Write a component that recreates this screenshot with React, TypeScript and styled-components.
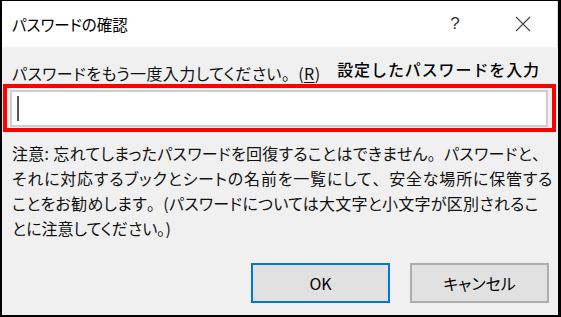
import styled, { createGlobalStyle } from 'styled-components';

const GlobalStyle = createGlobalStyle`
  html, body {
    margin: 0;
    padding: 0;
    background: #ffffff;
  }
  * {
    box-sizing: border-box;
  }
`;

const uiFont = `"Noto Sans CJK JP", "Noto Sans", sans-serif`;

const Frame = styled.div`
  width: 561px;
  height: 317px;
  display: flex;
  flex-direction: column;
  background: #f0f0f0;
  border-style: solid;
  border-color: #000;
  border-width: 1px 3px 2px 2px;
  font-family: ${uiFont};
  font-feature-settings: 'palt';
  color: #000;
`;

const TitleBar = styled.div`
  height: 46px;
  flex-shrink: 0;
  display: flex;
  align-items: center;
  background: #ffffff;
  padding-left: 10px;
  border-right: 1px solid #d8d8d8;
`;

const Title = styled.div`
  flex: 1;
  font-size: 15.5px;
  line-height: 20px;
  padding-bottom: 1px;
`;

const TitleButton = styled.div`
  width: 68px;
  height: 46px;
  display: flex;
  align-items: center;
  justify-content: center;
  color: #333;
  font-family: "Liberation Sans", sans-serif;
  font-size: 17px;
  font-weight: 300;
`;

const Body = styled.div`
  flex: 1;
  display: flex;
  flex-direction: column;
`;

const LabelRow = styled.div`
  display: flex;
  align-items: flex-end;
  justify-content: space-between;
  margin-top: 14px;
  padding-left: 10px;
  padding-right: 18px;
  height: 23px;
`;

const Label = styled.div`
  font-size: 16px;
  line-height: 22px;
  letter-spacing: 0.4px;
  color: #111;

  u {
    text-underline-offset: 2px;
  }
`;

/* full-width punctuation, as the dialog font draws it */
const Punct = styled.span`
  font-feature-settings: normal;
`;

const Annotation = styled.div`
  font-size: 16px;
  line-height: 20px;
  font-weight: 500;
  letter-spacing: 0.9px;
  font-feature-settings: normal;
  padding-bottom: 5px;
`;

const RedBox = styled.div`
  margin: 0 2px 0 1px;
  border: 4px solid #ff0000;
  padding: 2px 4px 1px 3px;
`;

const Input = styled.div`
  height: 37px;
  background: #ffffff;
  border: 2px solid #cdcdcd;
  display: flex;
  align-items: center;
  padding-left: 5px;
`;

const Caret = styled.span`
  width: 2px;
  height: 25px;
  background: #555;
`;

const Note = styled.div`
  margin-top: 9px;
  padding-left: 10px;
  font-size: 16px;
  line-height: 25px;
  white-space: nowrap;
  color: #111;
`;

const NoteLine = styled.div<{ $track: number }>`
  letter-spacing: ${(p) => p.$track}px;
`;

const ButtonRow = styled.div`
  margin-top: auto;
  display: flex;
  justify-content: flex-end;
  gap: 20px;
  padding: 0 9px 12px 0;
`;

const Button = styled.button<{ $primary?: boolean }>`
  width: 139px;
  height: 40px;
  background: #e1e1e1;
  border: 2px solid ${(p) => (p.$primary ? '#0078d7' : '#adadad')};
  font-family: ${uiFont};
  font-feature-settings: 'palt';
  font-size: 16px;
  color: #000;
  padding: 0;
`;

const CloseIcon = () => (
  <svg width="16" height="16" viewBox="0 0 16 16">
    <path d="M1 1 L15 15 M15 1 L1 15" stroke="#444" strokeWidth="1.1" fill="none" />
  </svg>
);

export default function App() {
  return (
    <>
      <GlobalStyle />
      <Frame>
        <TitleBar>
          <Title>パスワードの確認</Title>
          <TitleButton>?</TitleButton>
          <TitleButton>
            <CloseIcon />
          </TitleButton>
        </TitleBar>
        <Body>
          <LabelRow>
            <Label>
              パスワードをもう一度入力してください<Punct>。</Punct>(<u>R</u>)
            </Label>
            <Annotation>設定したパスワードを入力</Annotation>
          </LabelRow>
          <RedBox>
            <Input>
              <Caret />
            </Input>
          </RedBox>
          <Note>
            <NoteLine $track={0.3}>
              注意: 忘れてしまったパスワードを回復することはできません<Punct>。</Punct>パスワードと
              <Punct>、</Punct>
            </NoteLine>
            <NoteLine $track={0.8}>
              それに対応するブックとシートの名前を一覧にして<Punct>、</Punct>安全な場所に保管する
            </NoteLine>
            <NoteLine $track={0.25}>
              ことをお勧めします<Punct>。</Punct>(パスワードについては大文字と小文字が区別されるこ
            </NoteLine>
            <NoteLine $track={0}>
              とに注意してください<Punct>。</Punct>)
            </NoteLine>
          </Note>
          <ButtonRow>
            <Button $primary>OK</Button>
            <Button>キャンセル</Button>
          </ButtonRow>
        </Body>
      </Frame>
    </>
  );
}
